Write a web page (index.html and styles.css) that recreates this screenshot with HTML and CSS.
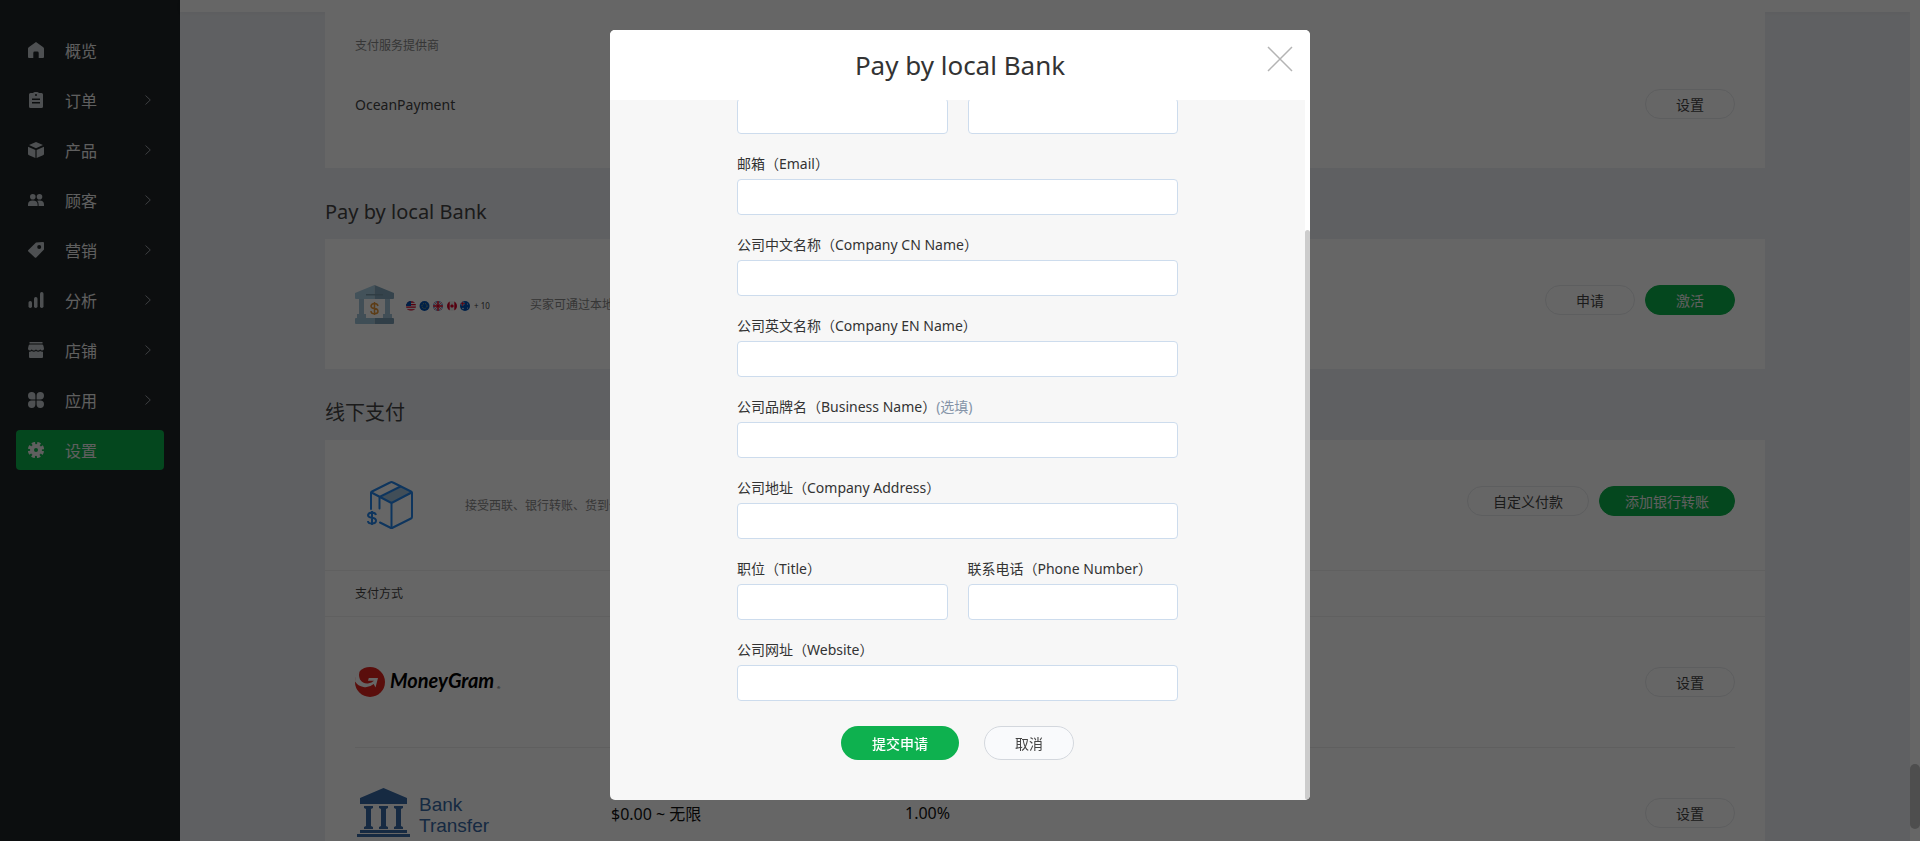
FILE: index.html
```html
<!DOCTYPE html>
<html lang="zh-CN">
<head>
    <meta charset="UTF-8">
    <meta name="viewport" content="width=device-width, initial-scale=1.0">
    <link rel="stylesheet" href="styles.css">
    <title>设置 - 支付</title>
</head>
<body>
    <div class="app">
        <nav class="sidebar">
            <a href="#" class="nav-item">
                <svg class="nav-icon" viewBox="0 0 16 16"><path d="M8 0L.7 5.2Q0 5.8 0 6.600V15q0 1 1 1h4.300v-5q0-1.400 1.400-1.400h2.600q1.400 0 1.400 1.400v5H15q1 0 1-1V6.600q0-.8-.7-1.400z"/></svg>
                <span>概览</span>
            </a>
            <a href="#" class="nav-item">
                <svg class="nav-icon" viewBox="0 0 16 16"><path fill-rule="evenodd" d="M2.500 1H5L6 .3Q6.500 0 7 0h2q.5 0 1 .3l1 .7h2.500Q15 1 15 2.500v12q0 1.500-1.500 1.500h-11Q1 16 1 14.500v-12Q1 1 2.500 1zM8 2a1 1 0 1 0 0 2a1 1 0 1 0 0-2zM4 6.500V8h8V6.500zM4 10v1.500h8V10z"/></svg>
                <span>订单</span>
                <svg class="nav-arrow" viewBox="0 0 6 10"><path d="M.5 0.500L5.300 5L.5 9.500"/></svg>
            </a>
            <a href="#" class="nav-item">
                <svg class="nav-icon" viewBox="0 0 16 16"><path d="M8 0l7 3.100L8 6.300L1 3.100zM0 4.700l7.400 3.200V16L1 13.300Q0 12.800 0 12zM16 4.700L8.600 7.900V16l6.400-2.700q1-.5 1-1.300z"/></svg>
                <span>产品</span>
                <svg class="nav-arrow" viewBox="0 0 6 10"><path d="M.5 0.500L5.300 5L.5 9.500"/></svg>
            </a>
            <a href="#" class="nav-item">
                <svg class="nav-icon" viewBox="0 0 16 16"><circle cx="4.800" cy="4.800" r="2.800"/><circle cx="11.500" cy="4.800" r="2.800"/><path d="M0 14v-1.500Q0 8.500 4.800 8.500T9.600 12.500V14zM10.600 14v-1.500q0-2.400-1.500-3.700Q10.200 8.500 11.500 8.500q4.500 0 4.500 4V14z"/></svg>
                <span>顾客</span>
                <svg class="nav-arrow" viewBox="0 0 6 10"><path d="M.5 0.500L5.300 5L.5 9.500"/></svg>
            </a>
            <a href="#" class="nav-item">
                <svg class="nav-icon" viewBox="0 0 16 16"><path fill-rule="evenodd" d="M8 .6L15 0q1 0 1 1v6.500L8.300 15.500q-.7.7-1.500 0L.4 9.500q-.8-.8 0-1.500zM11.200 3a2 2 0 1 0 0 4a2 2 0 1 0 0-4z"/></svg>
                <span>营销</span>
                <svg class="nav-arrow" viewBox="0 0 6 10"><path d="M.5 0.500L5.300 5L.5 9.500"/></svg>
            </a>
            <a href="#" class="nav-item">
                <svg class="nav-icon" viewBox="0 0 16 16"><rect x="0.500" y="9" width="3.500" height="7" rx="1.700"/><rect x="6" y="5" width="3.500" height="11" rx="1.700"/><rect x="12" y="0" width="3.500" height="16" rx="1.700"/></svg>
                <span>分析</span>
                <svg class="nav-arrow" viewBox="0 0 6 10"><path d="M.5 0.500L5.300 5L.5 9.500"/></svg>
            </a>
            <a href="#" class="nav-item">
                <svg class="nav-icon" viewBox="0 0 16 16"><path d="M1.500 0h13v1.500h-13zM2 2.600h12q1.200 0 1.400 1.200L16 6.500q0 2-1.700 2t-2.100-1.300q-.4 1.300-2.100 1.300T8 7.200q-.4 1.300-2.100 1.300T3.800 7.200Q3.400 8.500 1.700 8.500T0 6.500l.6-2.700Q.8 2.600 2 2.600zM1 9.800q1.700.2 2.800-.7q2 1.400 4.200 0q2.200 1.400 4.200 0q1.100.9 2.800.7V15q0 1-1 1H2q-1 0-1-1z"/></svg>
                <span>店铺</span>
                <svg class="nav-arrow" viewBox="0 0 6 10"><path d="M.5 0.500L5.300 5L.5 9.500"/></svg>
            </a>
            <a href="#" class="nav-item">
                <svg class="nav-icon" viewBox="0 0 16 16"><path d="M3.700 0a3.700 3.700 0 0 1 3.700 3.700v3.700H3.700A3.700 3.700 0 0 1 3.700 0zM12.300 0a3.700 3.700 0 0 1 0 7.400H8.600V3.700A3.700 3.700 0 0 1 12.300 0zM3.700 8.600h3.700v3.700A3.700 3.700 0 1 1 3.700 8.600zM8.600 8.600h3.700a3.700 3.700 0 1 1-3.700 3.700z"/></svg>
                <span>应用</span>
                <svg class="nav-arrow" viewBox="0 0 6 10"><path d="M.5 0.500L5.300 5L.5 9.500"/></svg>
            </a>
            <a href="#" class="nav-item active">
                <svg class="nav-icon gear" viewBox="0 0 16 16">
                    <circle cx="8" cy="8" r="4" stroke-width="4"/>
                    <circle cx="8" cy="8" r="6.700" stroke-width="3" stroke-dasharray="3.260 2" stroke-dashoffset="-1"/>
                </svg>
                <span>设置</span>
            </a>
        </nav>

        <main class="main">
            <div class="topbar"></div>
            <div class="content">
                <section class="card provider-card">
                    <div class="card-head muted">支付服务提供商</div>
                    <div class="provider-row">
                        <span>OceanPayment</span>
                        <button type="button" class="btn">设置</button>
                    </div>
                </section>

                <h2 class="section-title">Pay by local Bank</h2>
                <section class="card">
                    <div class="intro">
                        <svg class="bank-icon" viewBox="0 0 39 39">
                            <path fill="#a9cde0" d="M0 8L19.500 0v14H1q-1 0-1-1z"/>
                            <path fill="#84a9be" d="M19.500 0L39 8v5q0 1-1 1H19.500z"/>
                            <path fill="#7899aa" d="M11 9h17v1.500H11z"/>
                            <path fill="#a2c4d6" d="M4 14h5v15h2v4H2v-4h2zM30 14h5v15h2v4h-9v-4h2z"/>
                            <path fill="#9dc3d8" d="M1 33h18.500v6H1q-1 0-1-1v-4q0-1 1-1z"/>
                            <path fill="#7c9fb4" d="M19.500 33H38q1 0 1 1v4q0 1-1 1H19.500z"/>
                            <path fill="none" stroke="#e9983b" stroke-width="1.500" d="M19.500 17v13M23 21q-.5-2.500-3.500-2.500T16 21q0 2.200 3.500 2.500t3.500 2.800q0 2.500-3.500 2.500T16 26"/>
                        </svg>
                        <svg class="flags" viewBox="0 0 86 12">
                            <defs>
                                <clipPath id="c1"><circle cx="5" cy="6" r="5"/></clipPath>
                                <clipPath id="c3"><circle cx="32" cy="6" r="5"/></clipPath>
                                <clipPath id="c4"><circle cx="46" cy="6" r="5"/></clipPath>
                                <clipPath id="c5"><circle cx="59" cy="6" r="5"/></clipPath>
                            </defs>
                            <g clip-path="url(#c1)">
                                <path fill="#eee" d="M0 1h10v10H0z"/>
                                <path stroke="#d80027" stroke-width="1.300" d="M0 2h10M0 4.600h10M0 7.200h10M0 9.800h10"/>
                                <path fill="#0052b4" d="M0 1h5v5H0z"/>
                            </g>
                            <circle cx="18.500" cy="6" r="5" fill="#0052b4"/>
                            <circle cx="18.500" cy="6" r="2.500" fill="none" stroke="#ffda44" stroke-width=".8" stroke-dasharray=".8 1.200"/>
                            <g clip-path="url(#c3)">
                                <path fill="#0052b4" d="M27 1h10v10H27z"/>
                                <path stroke="#eee" stroke-width="2" d="M27 1l10 10M37 1L27 11"/>
                                <path stroke="#eee" stroke-width="3" d="M32 1v10M27 6h10"/>
                                <path stroke="#d80027" stroke-width="1.500" d="M32 1v10M27 6h10"/>
                                <path stroke="#d80027" stroke-width=".6" d="M27 1l10 10M37 1L27 11"/>
                            </g>
                            <g clip-path="url(#c4)">
                                <path fill="#eee" d="M41 1h10v10H41z"/>
                                <path fill="#d80027" d="M41 1h2.700v10H41zM48.300 1H51v10h-2.700zM46 3.500l.7 1.500 1.300.7-1 1.800h-2l-1-1.800 1.300-.7z"/>
                            </g>
                            <g clip-path="url(#c5)">
                                <path fill="#0052b4" d="M54 1h10v10H54z"/>
                                <path stroke="#eee" stroke-width="1.500" d="M56.500 1v5M54 3.500h5"/>
                                <path stroke="#d80027" stroke-width=".8" d="M56.500 1v5M54 3.500h5"/>
                                <circle cx="57" cy="8.500" r=".8" fill="#eee"/><circle cx="61.500" cy="4" r=".6" fill="#eee"/><circle cx="61.500" cy="8" r=".6" fill="#eee"/>
                            </g>
                            <text x="68" y="9" font-size="8" fill="#444">+ 10</text>
                        </svg>
                        <p class="desc">买家可通过本地</p>
                        <div class="actions">
                            <button type="button" class="btn">申请</button>
                            <button type="button" class="btn btn-primary">激活</button>
                        </div>
                    </div>
                </section>

                <h2 class="section-title">线下支付</h2>
                <section class="card">
                    <div class="intro">
                        <svg class="box-icon" viewBox="0 0 70 50">
                            <path fill="#a4c4dd" d="M46 7L58 13 37 23 26 17z"/>
                            <g fill="none" stroke="#2586ea" stroke-width="2" stroke-linejoin="round" stroke-linecap="round">
                                <path d="M16 29V13q0-1 1-1.500L35 2.500q1.500-.8 3 0L56 11.500q1 .5 1 1.500V37q0 1-1 1.500L38 47.500q-1.500.8-3 0L25 42.500"/>
                                <path d="M16.500 12.500L36.500 23 56.500 12.500M36.500 23v25M24.500 28.500V17L45.500 6.500"/>
                            </g>
                            <path fill="none" stroke="#2586ea" stroke-width="2" d="M17 31v14M21 35q-.8-2.500-4-2.500T13 35q0 2.400 4 2.800t4 3q0 2.700-4 2.700t-4-2.500"/>
                        </svg>
                        <p class="desc">接受西联、银行转账、货到付</p>
                        <div class="actions">
                            <button type="button" class="btn">自定义付款</button>
                            <button type="button" class="btn btn-primary">添加银行转账</button>
                        </div>
                    </div>
                    <div class="card-head bordered">支付方式</div>
                    <div class="method">
                        <svg class="moneygram" viewBox="0 0 150 30" role="img" aria-label="MoneyGram">
                            <circle cx="15" cy="15" r="15" fill="#e0251f"/>
                            <path fill="#fff" d="M5 3Q3 8 5 12.500 8 17 13 16.500q4-.5 6-2.700h-6l.8-2.800H23l-2.500 9.500-1.800-3.500Q14 21 8.500 20 3 19 0 14.500 0 7 5 3z"/>
                            <text x="35" y="21" class="moneygram-text">MoneyGram</text>
                            <text x="142" y="22" font-size="4">®</text>
                        </svg>
                        <button type="button" class="btn">设置</button>
                    </div>
                    <div class="method">
                        <svg class="bank-transfer" viewBox="0 0 150 50" role="img" aria-label="Bank Transfer">
                            <g fill="#3769a5">
                                <path d="M5 10L28.500 0 52 10v6H5zM9 18h9v2l-2 1v17l2 1v2H9v-2l2-1V21l-2-1zM24 18h9v2l-2 1v17l2 1v2h-9v-2l2-1V21l-2-1zM39 18h9v2l-2 1v17l2 1v2h-9v-2l2-1V21l-2-1zM5 42h47v3H5zM2 46h53v3H2z"/>
                                <text x="64" y="23" class="transfer-text">Bank</text>
                                <text x="64" y="44" class="transfer-text">Transfer</text>
                            </g>
                        </svg>
                        <span class="limit">$0.00 ~ 无限</span>
                        <span class="rate">1.00%</span>
                        <button type="button" class="btn">设置</button>
                    </div>
                </section>
            </div>
        </main>
        <div class="page-scroll"><div class="page-thumb"></div></div>
    </div>

    <div class="overlay">
        <div class="modal" role="dialog" aria-labelledby="modalTitle">
            <header class="modal-header">
                <h1 id="modalTitle">Pay by local Bank</h1>
                <button type="button" class="close" aria-label="关闭">
                    <svg viewBox="0 0 26 26"><path d="M1 1l24 24M25 1L1 25"/></svg>
                </button>
            </header>
            <div class="modal-body">
                <form class="form">
                    <div class="field-row">
                        <div class="field"><input type="text" aria-label="姓"></div>
                        <div class="field"><input type="text" aria-label="名"></div>
                    </div>
                    <div class="field">
                        <label for="email">邮箱（Email）</label>
                        <input type="email" id="email">
                    </div>
                    <div class="field">
                        <label for="cnName">公司中文名称（Company CN Name）</label>
                        <input type="text" id="cnName">
                    </div>
                    <div class="field">
                        <label for="enName">公司英文名称（Company EN Name）</label>
                        <input type="text" id="enName">
                    </div>
                    <div class="field">
                        <label for="brand">公司品牌名（Business Name）<span class="optional">(选填)</span></label>
                        <input type="text" id="brand">
                    </div>
                    <div class="field">
                        <label for="address">公司地址（Company Address）</label>
                        <input type="text" id="address">
                    </div>
                    <div class="field-row">
                        <div class="field">
                            <label for="jobTitle">职位（Title）</label>
                            <input type="text" id="jobTitle">
                        </div>
                        <div class="field">
                            <label for="phone">联系电话（Phone Number）</label>
                            <input type="tel" id="phone">
                        </div>
                    </div>
                    <div class="field">
                        <label for="website">公司网址（Website）</label>
                        <input type="text" id="website">
                    </div>
                    <div class="form-actions">
                        <button type="submit" class="submit">提交申请</button>
                        <button type="button" class="cancel">取消</button>
                    </div>
                </form>
                <div class="modal-scroll"><div class="modal-thumb"></div></div>
            </div>
        </div>
    </div>
</body>
</html>
```
FILE: styles.css
```css
* {
    box-sizing: border-box;
}

body {
    margin: 0;
    font-family: "Noto Sans", "Noto Sans CJK SC", sans-serif;
    font-size: 14px;
    color: #444;
    background-color: #eef0f4;
}

h1, h2, p {
    margin: 0;
    font-weight: 400;
}

button, input {
    font-family: inherit;
    font-size: 14px;
}

button {
    cursor: pointer;
}

.app {
    display: flex;
    height: 100vh;
    overflow: hidden;
}

/* sidebar */
.sidebar {
    flex: 0 0 180px;
    display: flex;
    flex-direction: column;
    gap: 10px;
    padding: 30px 16px;
    background-color: #1e2326;
}

.nav-item {
    display: flex;
    align-items: center;
    gap: 21px;
    height: 40px;
    padding: 0 13px 0 12px;
    border-radius: 4px;
    font-size: 16px;
    color: #eee;
    text-decoration: none;
}

.nav-item.active {
    background-color: #0cb14b;
}

.nav-icon {
    width: 16px;
    height: 16px;
    fill: #c3c8cc;
}

.nav-icon.gear {
    fill: none;
    stroke: #eee;
}

.nav-arrow {
    width: 6px;
    height: 10px;
    margin-left: auto;
    fill: none;
    stroke: #9a9fa4;
}

/* page */
.main {
    flex: 1;
    min-width: 0;
}

.topbar {
    height: 12px;
    background-color: #fff;
    box-shadow: 0 1px 4px rgba(0, 0, 0, 0.04);
}

.content {
    width: 1440px;
    max-width: 100%;
    margin: 0 auto;
}

.card {
    background-color: #fff;
}

.provider-card {
    position: relative;
    padding: 11px 0 29px;
}

.card-head {
    padding: 0 30px;
    font-size: 12px;
    line-height: 46px;
}

.card-head.bordered {
    border-top: 1px solid #f0f0f0;
    border-bottom: 1px solid #f0f0f0;
    line-height: 45px;
}

.muted {
    color: #888;
}

.provider-row {
    display: flex;
    align-items: center;
    justify-content: space-between;
    height: 70px;
    padding: 0 30px;
}

.section-title {
    padding: 29px 0 12px;
    font-size: 20px;
    line-height: 30px;
}

.intro {
    display: flex;
    align-items: center;
    height: 130px;
    padding: 0 30px;
}

.bank-icon {
    width: 39px;
    height: 39px;
    margin-right: 12px;
}

.flags {
    width: 86px;
    height: 12px;
    margin: 4px 38px 0 0;
}

.box-icon {
    width: 70px;
    height: 50px;
    margin-right: 40px;
}

.desc {
    font-size: 12px;
    color: #888;
}

.actions {
    display: flex;
    gap: 10px;
    margin: 0 0 8px auto;
}

.btn {
    min-width: 90px;
    height: 30px;
    padding: 0 25px;
    border: 1px solid #e8eaed;
    border-radius: 15px;
    background-color: #fff;
    color: #444;
}

.btn-primary {
    border-color: #0cb14b;
    background-color: #0cb14b;
    color: #eee;
}

.method {
    display: flex;
    align-items: center;
    height: 130px;
    margin: 0 30px;
    font-size: 16px;
    color: #111;
}

.method + .method {
    border-top: 1px solid #eee;
}

.method .btn {
    margin-left: auto;
}

.moneygram {
    width: 150px;
    height: 30px;
}

.moneygram-text {
    font-family: Lato, sans-serif;
    font-size: 20px;
    font-weight: 700;
    font-style: italic;
}

.bank-transfer {
    width: 150px;
    height: 50px;
    margin-right: 106px;
}

.transfer-text {
    font-family: "Liberation Sans", sans-serif;
    font-size: 19px;
}

.limit {
    width: 294px;
}

.page-scroll {
    display: flex;
    flex-direction: column;
    justify-content: flex-end;
    flex: 0 0 10px;
    padding-bottom: 12px;
    background-color: #fff;
}

.page-thumb {
    height: 65px;
    border-radius: 5px;
    background-color: #c3c3c3;
}

/* modal */
.overlay {
    position: fixed;
    inset: 0;
    display: flex;
    justify-content: center;
    padding: 30px 0 41px;
    background-color: rgba(0, 0, 0, 0.6);
}

.modal {
    position: relative;
    display: flex;
    flex-direction: column;
    width: 700px;
    border-radius: 5px;
    overflow: hidden;
    color: #333;
    background-color: #f7f7f7;
}

.modal-header {
    flex: 0 0 70px;
    background-color: #fff;
    text-align: center;
}

.modal-header h1 {
    font-size: 26px;
    line-height: 70px;
}

.close {
    position: absolute;
    top: 16px;
    right: 17px;
    width: 26px;
    height: 26px;
    padding: 0;
    border: none;
    background: none;
}

.close svg {
    display: block;
    fill: none;
    stroke: #b4b4b4;
    stroke-width: 1.5;
}

.modal-body {
    flex: 1;
    display: flex;
    min-height: 0;
    overflow: hidden;
}

/* keeps the form resting on its last row */
.form {
    display: flex;
    flex-direction: column;
    justify-content: flex-end;
    gap: 20px;
    width: 441px;
    margin: 0 auto;
    padding-bottom: 40px;
}

.field-row {
    display: grid;
    grid-template-columns: 1fr 1fr;
    gap: 20px;
}

.field {
    display: flex;
    flex-direction: column;
    gap: 5px;
}

.field label {
    line-height: 20px;
}

.optional {
    color: #8594a8;
}

.field input {
    width: 100%;
    height: 36px;
    padding: 0 10px;
    border: 1px solid #cddced;
    border-radius: 4px;
    background-color: #fff;
}

.form-actions {
    display: flex;
    justify-content: center;
    gap: 25px;
    padding-top: 5px;
}

.form-actions button {
    height: 34px;
    border-radius: 17px;
}

.submit {
    padding: 0 31px;
    border: none;
    background-color: #0eb14f;
    color: #fff;
    font-weight: 500;
}

.cancel {
    width: 90px;
    border: 1px solid #d3d7dd;
    background-color: #f9fafc;
    color: #444;
}

.modal-scroll {
    display: flex;
    flex-direction: column;
    justify-content: flex-end;
    width: 5px;
    background-color: #fff;
}

.modal-thumb {
    height: 570px;
    border-radius: 3px;
    background-color: #ccc;
}
```
